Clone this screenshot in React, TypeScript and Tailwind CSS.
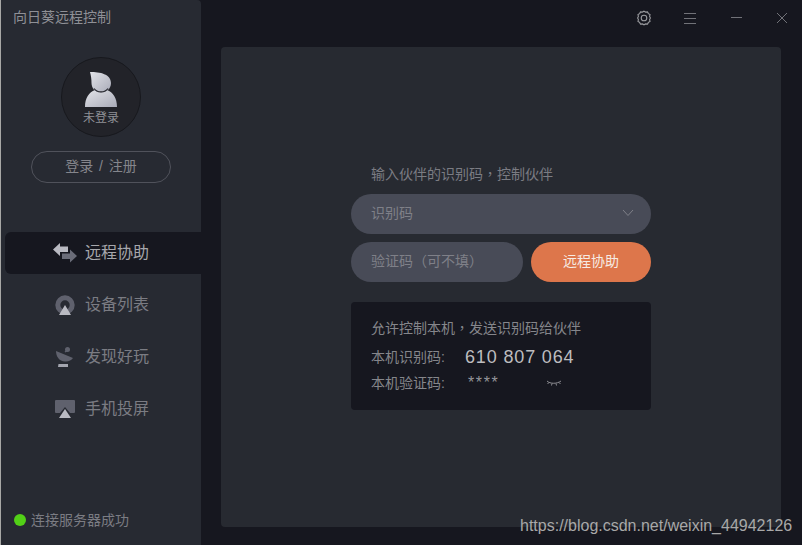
import React from 'react';

const cjk = "font-['Liberation_Sans','Noto_Sans_CJK_SC',sans-serif]";

// the centred comma of the reference only exists in the TC cut
const Comma = () => <span className="font-['Noto_Sans_CJK_TC',sans-serif]">，</span>;

const AvatarIcon = () => (
  <svg width="34" height="36" viewBox="0 0 34 36">
    <defs>
      <linearGradient id="av" x1="0" y1="0" x2="1" y2="1">
        <stop offset="0" stopColor="#e2e3e8" />
        <stop offset="1" stopColor="#a9abb8" />
      </linearGradient>
    </defs>
    <path d="M1 35 C1 26 5 20 11 18 C14 21 20 21 23 18 C29 20 33 26 33 35 Z" fill="url(#av)" />
    <path d="M6 0 C16 0 27 2 27 11 C27 17 22 20.5 17 20.5 C11 20.5 7.5 16 7.5 11 C7.5 7 7 4 6 0 Z" fill="url(#av)" />
    <path d="M10 16.5 C13 21 21 21 24 16.5" fill="none" stroke="#26272e" strokeWidth="1.2" />
  </svg>
);

const RemoteIcon = () => (
  <svg width="24" height="20" viewBox="0 0 24 20">
    <path d="M0 6.5 L7 0 V3.5 H15 V9 H7 V13 Z" fill="#b9bac2" />
    <path d="M24 13 L17 19.5 V16 H9 V10.5 H17 V6.5 Z" fill="#6a6c78" />
  </svg>
);

const DevicesIcon = () => (
  <svg width="20" height="20" viewBox="0 0 20 20">
    <circle cx="10" cy="10" r="7.2" fill="none" stroke="#5f616d" strokeWidth="5" />
    <path d="M10 10 L16 20 H4 Z" fill="#b9bac2" />
  </svg>
);

const DiscoverIcon = () => (
  <svg width="20" height="20" viewBox="0 0 20 20">
    <path d="M1 4 C1 9 4 15 11 14.5 C14 14.5 16.5 13 18 11 Z" fill="#5f616d" />
    <circle cx="12.5" cy="2.5" r="2.5" fill="#5f616d" />
    <path d="M10 5 L13 3" stroke="#5f616d" strokeWidth="1.5" />
    <path d="M3.5 17 H13 V20 H3 Z" fill="#a3a5af" />
  </svg>
);

const CastIcon = () => (
  <svg width="20" height="18" viewBox="0 0 20 18">
    <path d="M1 0 H19 Q20 0 20 1 V12 Q20 13 19 13 H15 L10 7 L5 13 H1 Q0 13 0 12 V1 Q0 0 1 0 Z" fill="#5f616d" />
    <path d="M10 9 L16 18 H4 Z" fill="#b9bac2" />
  </svg>
);

const navItems = [
  { label: '远程协助', icon: <RemoteIcon />, active: true },
  { label: '设备列表', icon: <DevicesIcon />, active: false },
  { label: '发现好玩', icon: <DiscoverIcon />, active: false },
  { label: '手机投屏', icon: <CastIcon />, active: false },
];

const Sidebar = () => (
  <aside className="w-[200px] h-full bg-[#272a32] rounded-tr-sm flex flex-col shrink-0">
    <div className="h-[34px] pl-3 flex items-center text-[14px] text-[#8f9096]">向日葵远程控制</div>
    <div className="mt-[23px] flex justify-center">
      <div className="w-20 h-20 rounded-full bg-[#222329] border border-[#17181d] flex flex-col items-center pt-[14px]">
        <AvatarIcon />
        <span className="text-[12px] leading-[16px] mt-[2px] text-[#8f9096]">未登录</span>
      </div>
    </div>
    <div className="mt-[14px] flex justify-center">
      <button className="w-[140px] h-8 rounded-full border border-[#50525b] pb-[2px] text-[14px] [word-spacing:2px] text-[#85868c]">登录 / 注册</button>
    </div>
    <nav className="mt-[49px] flex flex-col gap-[10px] pl-1">
      {navItems.map(item => (
        <div
          key={item.label}
          className={`h-[42px] flex items-center pl-[48px] rounded-l-md ${item.active ? 'bg-[#16171f] text-[#a6a7ac] w-[197px]' : 'text-[#7b7c83]'}`}
        >
          <span className="w-6 flex justify-center">{item.icon}</span>
          <span className="ml-2 text-[16px]">{item.label}</span>
        </div>
      ))}
    </nav>
    <div className="mt-auto h-[50px] pl-[13px] flex items-center text-[14px] text-[#7b7c83]">
      <span className="w-3 h-3 rounded-full bg-[#52d017] mr-[5px]" />
      连接服务器成功
    </div>
  </aside>
);

const TopBar = () => (
  <div className="h-[47px] shrink-0 relative">
    <div className="absolute top-[9px] left-[434px]">
      <svg width="18" height="18" viewBox="0 0 18 18" fill="none" stroke="#9a9b9f" strokeWidth="1.1">
        <path d="M9 2.2 L10.6 3.1 L12.5 2.9 L13.4 4.6 L15 5.6 L14.6 7.4 L15.4 9 L14.6 10.6 L15 12.4 L13.4 13.4 L12.5 15.1 L10.6 14.9 L9 15.8 L7.4 14.9 L5.5 15.1 L4.6 13.4 L3 12.4 L3.4 10.6 L2.6 9 L3.4 7.4 L3 5.6 L4.6 4.6 L5.5 2.9 L7.4 3.1 Z" />
        <circle cx="9" cy="9" r="2.8" />
      </svg>
    </div>
    <div className="absolute top-[13px] left-[483px] w-3 flex flex-col gap-[4px]">
      <span className="h-px bg-[#717278]" />
      <span className="h-px bg-[#717278]" />
      <span className="h-px bg-[#717278]" />
    </div>
    <span className="absolute top-[17px] left-[530px] w-[11px] h-px bg-[#717278]" />
    <div className="absolute top-[12px] left-[575px]">
      <svg width="12" height="12" viewBox="0 0 12 12" stroke="#717278" strokeWidth="1">
        <path d="M1 1 L11 11 M11 1 L1 11" />
      </svg>
    </div>
  </div>
);

const Panel = () => (
  <div className="w-[560px] h-[480px] ml-5 bg-[#272a31] rounded-sm flex flex-col items-center pt-[117px]">
    <div className="w-[300px]">
      <div className="pl-5 h-[18px] leading-[18px] text-[14px] text-[#7b7c83]">输入伙伴的识别码<Comma />控制伙伴</div>
      <div className="mt-[12px] h-10 rounded-full bg-[#484b57] pl-5 pr-4 pb-[2px] flex items-center justify-between text-[14px] text-[#7f8088]">
        识别码
        <svg width="14" height="8" viewBox="0 0 14 8" fill="none" stroke="#7f8088" strokeWidth="1">
          <path d="M2 1 L7 6.5 L12 1" />
        </svg>
      </div>
      <div className="mt-2 flex gap-2">
        <div className="w-[172px] h-10 rounded-full bg-[#484b57] pl-5 pb-[2px] flex items-center text-[14px] text-[#7f8088]">验证码（可不填）</div>
        <button className="w-[120px] h-10 rounded-full bg-[#dd764b] pb-[2px] text-[14px] text-[#f6ebe4]">远程协助</button>
      </div>
      <div className="mt-5 h-[108px] rounded-sm bg-[#16171f] pl-5 pt-[16px] text-[#85868b]">
        <div className="h-[18px] leading-[18px] text-[14px]">允许控制本机<Comma />发送识别码给伙伴</div>
        <div className="mt-[11px] h-5 flex items-center text-[14px]">
          <span className="w-[94px]">本机识别码:</span>
          <span className="text-[18px] tracking-[0.85px] text-[#bdbdbf] font-['Liberation_Sans',sans-serif]">610 807 064</span>
        </div>
        <div className="mt-[6px] h-5 flex items-center text-[14px]">
          <span className="w-[97px]">本机验证码:</span>
          <span className="w-[78px] text-[16px] tracking-[1.6px] text-[#94959a]">****</span>
          <svg width="16" height="8" viewBox="0 0 16 8" fill="none" stroke="#a9aaae" strokeWidth="0.8">
            <path d="M1 2 C4 5 11 5 15 2 M3 3.5 L1.5 5 M6 4.5 L5.5 6.5 M10 4.5 L10.5 6.5 M13 3.5 L14.5 5" />
          </svg>
        </div>
      </div>
    </div>
  </div>
);

const App = () => (
  <div className={`relative w-[802px] h-[545px] overflow-hidden bg-[#16171f] flex ${cjk}`}>
    <div className="w-px h-full bg-[#a8a8a6] shrink-0" />
    <Sidebar />
    <main className="flex-1 flex flex-col">
      <TopBar />
      <Panel />
    </main>
    <span className="absolute left-[520px] top-[517px] text-[16px] leading-[18px] text-[#a8a8a8] font-['Liberation_Sans',sans-serif]">
      https://blog.csdn.net/weixin_44942126
    </span>
  </div>
);

export default App;
